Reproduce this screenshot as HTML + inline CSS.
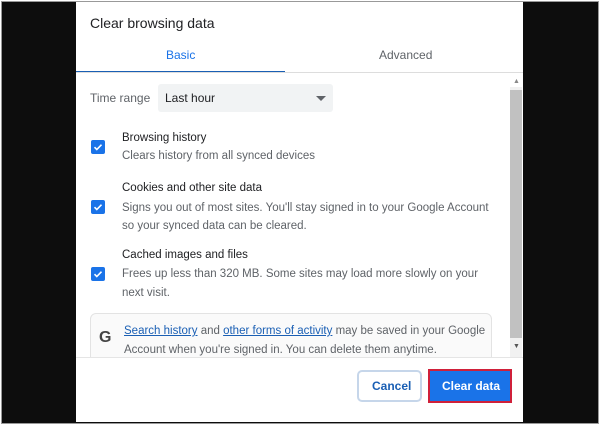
<!DOCTYPE html>
<html><head><style>
*{margin:0;padding:0;box-sizing:border-box}
body{width:600px;height:425px;background:#fff;font-family:"Liberation Sans",sans-serif;position:relative;overflow:hidden}
.frame{position:absolute;left:1px;top:1px;width:598px;height:423px;border:1px solid #999;background:#0d0d0d}
.dlg{position:absolute;left:76px;top:2px;width:447px;height:420px;background:#fff}
.t{position:absolute;white-space:nowrap;color:#202124}
.g{color:#5f6368}
.cb{position:absolute;left:15px;width:14px;height:14px;background:#1a73e8;border-radius:2px}
.cb svg{position:absolute;left:0;top:0}
a{color:#1a5fb4;text-decoration:underline}
</style></head><body>
<div class="frame"></div>
<div class="dlg">
<div class="t" style="left:14px;top:13px;font-size:14px">Clear browsing data</div>
<div class="t" style="left:90px;top:46px;font-size:12px;color:#1a73e8">Basic</div>
<div class="t g" style="left:303px;top:46px;font-size:12px">Advanced</div>
<div style="position:absolute;left:0;top:69px;width:209px;height:2px;background:#1a5fb4"></div>
<div style="position:absolute;left:0;top:70px;width:447px;height:1px;background:#ddd"></div>
<div style="position:absolute;left:434px;top:85px;width:12px;height:270px;background:#f1f1f1"></div>
<div style="position:absolute;left:434px;top:88px;width:12px;height:248px;background:#c1c1c1"></div>
<div class="t" style="left:437px;top:76px;font-size:7px;color:#888">▲</div>
<div class="t" style="left:437px;top:341px;font-size:7px;color:#555">▼</div>
<div class="t g" style="left:14px;top:89px;font-size:12px">Time range</div>
<div style="position:absolute;left:82px;top:82px;width:175px;height:28px;background:#f1f3f4;border-radius:3px"></div>
<div class="t" style="left:89px;top:89px;font-size:12px">Last hour</div>
<div style="position:absolute;left:240px;top:94px;border-left:5px solid transparent;border-right:5px solid transparent;border-top:5px solid #5f6368"></div>

<div class="cb" style="top:138px"><svg width="14" height="14"><path d="M3.5 7.2l2.3 2.3 4.7-4.8" stroke="#fff" stroke-width="1.6" fill="none"/></svg></div>
<div class="t" style="left:46px;top:130px;font-size:11.5px">Browsing history</div>
<div class="t g" style="left:46px;top:148px;font-size:11.5px">Clears history from all synced devices</div>

<div class="cb" style="top:198px"><svg width="14" height="14"><path d="M3.5 7.2l2.3 2.3 4.7-4.8" stroke="#fff" stroke-width="1.6" fill="none"/></svg></div>
<div class="t" style="left:46px;top:180px;font-size:11.5px">Cookies and other site data</div>
<div class="t g" style="left:46px;top:197px;font-size:11.5px;line-height:18px">Signs you out of most sites. You'll stay signed in to your Google Account<br>so your synced data can be cleared.</div>

<div class="cb" style="top:265px"><svg width="14" height="14"><path d="M3.5 7.2l2.3 2.3 4.7-4.8" stroke="#fff" stroke-width="1.6" fill="none"/></svg></div>
<div class="t" style="left:46px;top:247px;font-size:11.5px">Cached images and files</div>
<div class="t g" style="left:46px;top:263px;font-size:11.5px;line-height:19px">Frees up less than 320 MB. Some sites may load more slowly on your<br>next visit.</div>

<div style="position:absolute;left:14px;top:311px;width:402px;height:50px;border:1px solid #e3e3e3;border-radius:6px;background:#fafafa"></div>
<div class="t" style="left:23px;top:327px;font-size:16px;font-weight:bold;color:#444">G</div>
<div class="t g" style="left:48px;top:320px;font-size:11.5px;line-height:19px"><a>Search history</a> and <a>other forms of activity</a> may be saved in your Google<br>Account when you're signed in. You can delete them anytime.</div>

<div style="position:absolute;left:0;top:355px;width:447px;height:65px;background:#fff;border-top:1px solid #e5e5e5"></div>
<div style="position:absolute;left:281px;top:368px;width:65px;height:32px;border:2px solid #c6d6ea;border-radius:5px;background:#fff"></div>
<div class="t" style="left:296px;top:377px;font-size:12px;font-weight:bold;color:#1a5fb4">Cancel</div>
<div style="position:absolute;left:352px;top:367px;width:84px;height:34px;border:2px solid #d0203a;background:#1a73e8"></div>
<div class="t" style="left:366px;top:377px;font-size:12px;font-weight:bold;color:#fff">Clear data</div>
</div>
</body></html>
